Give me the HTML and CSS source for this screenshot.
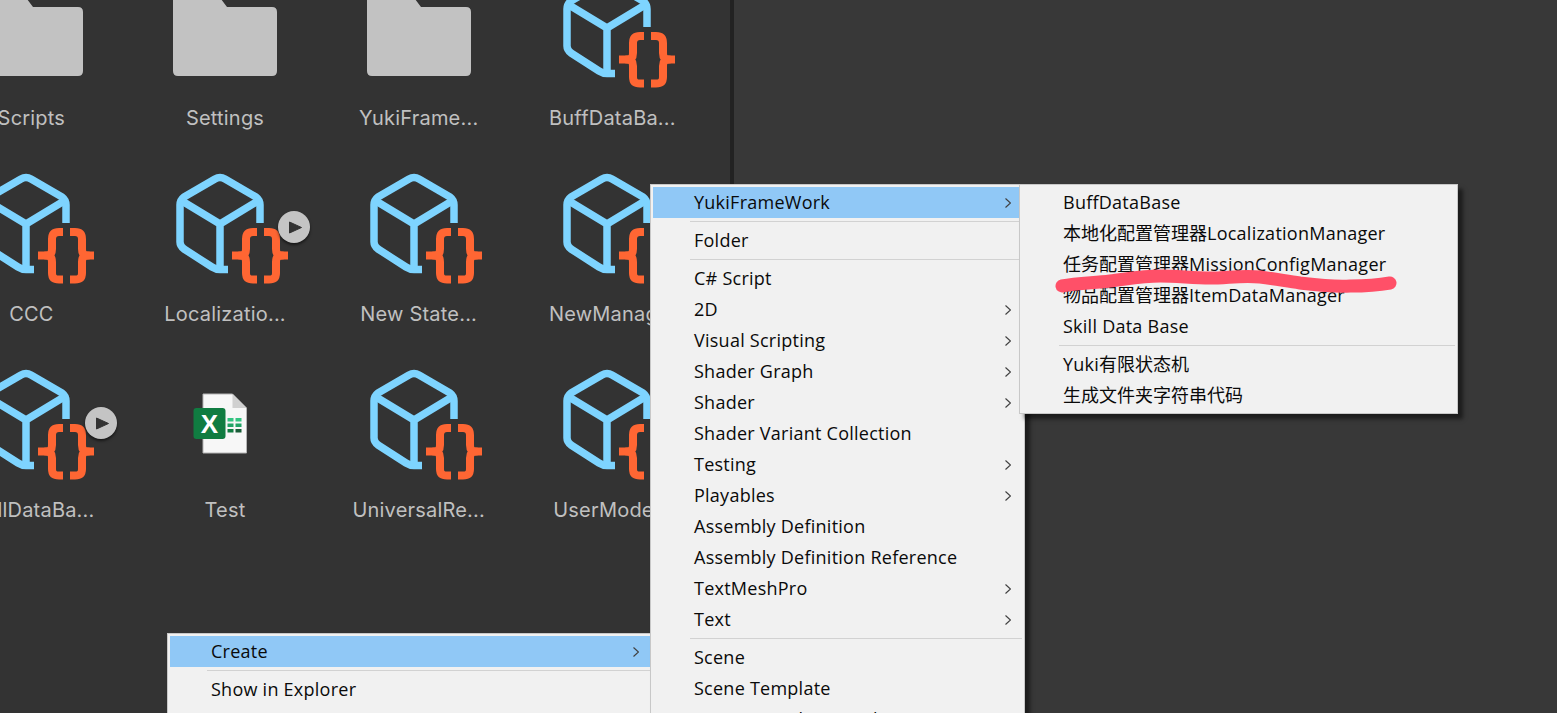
FILE: index.html
```html
<!DOCTYPE html>
<html lang="zh">
<head>
<meta charset="utf-8">
<title>Unity Project Create Menu</title>
<link rel="stylesheet" href="styles.css">
</head>
<body>
<svg class="defs" width="0" height="0" aria-hidden="true">
  <symbol id="script" viewBox="-11 -5 120 120">
    <g fill="none" stroke-linecap="butt" stroke-linejoin="round">
      <path class="cube" d="M84 51V33Q84 28 80 25L49 7Q44 4 39 7L8 25Q4 28 4 33V70Q4 74 8 77L36 95Q40 97.500 44 97.500H52"/>
      <path class="cube" d="M6 29L44 52L82 29M44 52V95"/>
      <path class="brace" d="M81 60H77Q70 60 70 67V77Q70 83.500 64 83.500Q70 83.500 70 90V101Q70 107.500 77 107.500H81"/>
      <path class="brace" d="M56 83.500H66"/>
      <path class="brace" d="M88 60H93Q100 60 100 67V77Q100 83.500 106 83.500Q100 83.500 100 90V101Q100 107.500 93 107.500H88"/>
      <path class="brace" d="M104 83.500H112"/>
    </g>
  </symbol>
  <symbol id="folder" viewBox="0 0 120 120">
    <path class="folder-shape" d="M13 22H50Q52 22 53 24L62 36H107Q112 36 112 41V100Q112 105 107 105H13Q8 105 8 100V27Q8 22 13 22Z"/>
  </symbol>
</svg>

<main class="editor">
  <section class="assets">
    <div class="grid">
      <div class="tile"><svg class="icon"><use href="#folder"/></svg><span class="name">Scripts</span></div>
      <div class="tile"><svg class="icon"><use href="#folder"/></svg><span class="name">Settings</span></div>
      <div class="tile"><svg class="icon"><use href="#folder"/></svg><span class="name">YukiFrame...</span></div>
      <div class="tile"><svg class="icon"><use href="#script"/></svg><span class="name">BuffDataBa...</span></div>

      <div class="tile"><svg class="icon"><use href="#script"/></svg><span class="name">CCC</span></div>
      <div class="tile">
        <svg class="icon"><use href="#script"/></svg>
        <span class="play"><svg width="13" height="13" viewBox="0 0 13 13"><path class="play-arrow" d="M.5 1L12.500 6.500L.5 12Z"/></svg></span>
        <span class="name">Localizatio...</span>
      </div>
      <div class="tile"><svg class="icon"><use href="#script"/></svg><span class="name">New State...</span></div>
      <div class="tile"><svg class="icon"><use href="#script"/></svg><span class="name">NewManag...</span></div>

      <div class="tile">
        <svg class="icon"><use href="#script"/></svg>
        <span class="play"><svg width="13" height="13" viewBox="0 0 13 13"><path class="play-arrow" d="M.5 1L12.500 6.500L.5 12Z"/></svg></span>
        <span class="name">SkillDataBa...</span>
      </div>
      <div class="tile">
        <svg class="icon" viewBox="0 0 120 120">
          <path class="xl-page" d="M38 31H67.500L81.500 45V90H38Z"/>
          <path class="xl-fold" d="M67.500 31L81.500 45H67.500Z"/>
          <rect class="xl-cell-light" x="62.500" y="55" width="6" height="3.500"/>
          <rect class="xl-cell-light" x="70.500" y="55" width="6" height="3.500"/>
          <rect class="xl-cell" x="62.500" y="60.500" width="6" height="3.500"/>
          <rect class="xl-cell" x="70.500" y="60.500" width="6" height="3.500"/>
          <rect class="xl-cell-mid" x="62.500" y="66" width="6" height="3.500"/>
          <rect class="xl-cell-dark" x="70.500" y="66" width="6" height="3.500"/>
          <rect class="xl-badge" x="28.500" y="45" width="32" height="31" rx="3"/>
          <text class="xl-x" x="44.500" y="70">X</text>
        </svg>
        <span class="name">Test</span>
      </div>
      <div class="tile"><svg class="icon"><use href="#script"/></svg><span class="name">UniversalRe...</span></div>
      <div class="tile"><svg class="icon"><use href="#script"/></svg><span class="name">UserMode...</span></div>
    </div>
  </section>
  <div class="divider"></div>
  <section class="scene"></section>
</main>

<nav class="menu menu-root">
  <div class="row active"><span>Create</span><svg class="chev" viewBox="0 0 6 10"><path d="M.5.5L5.500 5L.5 9.500"/></svg></div>
  <div class="sep"></div>
  <div class="row"><span>Show in Explorer</span></div>
</nav>

<nav class="menu menu-create">
  <div class="row active"><span>YukiFrameWork</span><svg class="chev" viewBox="0 0 6 10"><path d="M.5.5L5.500 5L.5 9.500"/></svg></div>
  <div class="sep"></div>
  <div class="row"><span>Folder</span></div>
  <div class="sep"></div>
  <div class="row"><span>C# Script</span></div>
  <div class="row"><span>2D</span><svg class="chev" viewBox="0 0 6 10"><path d="M.5.5L5.500 5L.5 9.500"/></svg></div>
  <div class="row"><span>Visual Scripting</span><svg class="chev" viewBox="0 0 6 10"><path d="M.5.5L5.500 5L.5 9.500"/></svg></div>
  <div class="row"><span>Shader Graph</span><svg class="chev" viewBox="0 0 6 10"><path d="M.5.5L5.500 5L.5 9.500"/></svg></div>
  <div class="row"><span>Shader</span><svg class="chev" viewBox="0 0 6 10"><path d="M.5.5L5.500 5L.5 9.500"/></svg></div>
  <div class="row"><span>Shader Variant Collection</span></div>
  <div class="row"><span>Testing</span><svg class="chev" viewBox="0 0 6 10"><path d="M.5.5L5.500 5L.5 9.500"/></svg></div>
  <div class="row"><span>Playables</span><svg class="chev" viewBox="0 0 6 10"><path d="M.5.5L5.500 5L.5 9.500"/></svg></div>
  <div class="row"><span>Assembly Definition</span></div>
  <div class="row"><span>Assembly Definition Reference</span></div>
  <div class="row"><span>TextMeshPro</span><svg class="chev" viewBox="0 0 6 10"><path d="M.5.5L5.500 5L.5 9.500"/></svg></div>
  <div class="row"><span>Text</span><svg class="chev" viewBox="0 0 6 10"><path d="M.5.5L5.500 5L.5 9.500"/></svg></div>
  <div class="sep"></div>
  <div class="row"><span>Scene</span></div>
  <div class="row"><span>Scene Template</span></div>
  <div class="row"><span>Scene Template Pipeline</span></div>
</nav>

<nav class="menu menu-yuki">
  <div class="row"><span>BuffDataBase</span></div>
  <div class="row"><span><span class="cjk">本地化配置管理器</span>LocalizationManager</span></div>
  <div class="row"><span><span class="cjk">任务配置管理器</span>MissionConfigManager</span></div>
  <div class="row"><span><span class="cjk">物品配置管理器</span>ItemDataManager</span></div>
  <div class="row"><span>Skill Data Base</span></div>
  <div class="sep"></div>
  <div class="row"><span>Yuki<span class="cjk">有限状态机</span></span></div>
  <div class="row"><span class="cjk">生成文件夹字符串代码</span></div>
</nav>

<svg class="scribble" viewBox="0 0 360 40" aria-hidden="true">
  <path d="M11 17C27 14 43 14 59 12C76 10 92 7 109 7C126 7 142 9 159 9C176 9 192 6 209 8C224 10 235 12 249 14C266 16 282 18 299 17C315 17 328 16 339 14"/>
</svg>
</body>
</html>
```

FILE: styles.css
```css
* { box-sizing: border-box; }

html, body {
  margin: 0;
  height: 100%;
  overflow: hidden;
  background: #383838;
}

.defs { position: absolute; }

symbol { overflow: visible; }

.editor {
  display: flex;
  height: 713px;
}

.assets {
  width: 730px;
  background: #333333;
  overflow: hidden;
}

.divider {
  width: 4px;
  background: #222222;
}

.scene {
  flex: 1;
  background: #383838;
}

.grid {
  display: grid;
  grid-template-columns: repeat(4, 193.7px);
  grid-auto-rows: 196px;
  margin: -29px 0 0 -65.5px;
}

.tile {
  position: relative;
  display: flex;
  flex-direction: column;
  align-items: center;
}

.icon {
  width: 120px;
  height: 120px;
  flex: none;
  overflow: visible;
}

.cube {
  stroke: #7ed4ff;
  stroke-width: 7.5;
}

.brace {
  stroke: #ff6633;
  stroke-width: 8;
}

.folder-shape { fill: #c2c2c2; }

.name {
  margin-top: 15px;
  font: 400 20px/24px Inter, "Liberation Sans", sans-serif;
  letter-spacing: .2px;
  color: #c0c0c0;
  white-space: nowrap;
}

.play {
  position: absolute;
  left: 150px;
  top: 44px;
  width: 32px;
  height: 32px;
  padding-left: 3px;
  display: flex;
  align-items: center;
  justify-content: center;
  border-radius: 50%;
  background: #c4c4c4;
  box-shadow: 0 2px 3px rgba(0, 0, 0, .55);
}

.play-arrow {
  fill: #333333;
  stroke: #333333;
  stroke-width: 1;
  stroke-linejoin: round;
}

.xl-page { fill: #f7f7f7; stroke: #b5b5b5; stroke-width: 1; }
.xl-fold { fill: #d0d0d0; }
.xl-badge { fill: #107c41; }
.xl-cell { fill: #21a366; }
.xl-cell-light { fill: #33c481; }
.xl-cell-mid { fill: #107c41; }
.xl-cell-dark { fill: #185c37; }
.xl-x {
  font: 700 26px "Liberation Sans", sans-serif;
  fill: #ffffff;
  text-anchor: middle;
}

.menu {
  position: absolute;
  padding: 2px;
  background: #f1f1f1;
  border: 1px solid #c8c8c8;
  font: 400 18px/24px "Open Sans", "Noto Sans CJK SC", sans-serif;
  letter-spacing: .25px;
  color: #0a0a0a;
  box-shadow: 5px 5px 4px rgba(0, 0, 0, .5);
}

.cjk { letter-spacing: 0; }

.menu-root {
  left: 167px;
  top: 633px;
  width: 486px;
  height: 120px;
}

.menu-create {
  left: 650px;
  top: 184px;
  width: 375px;
}

.menu-yuki {
  left: 1019px;
  top: 184px;
  width: 439px;
  height: 230px;
}

.row {
  height: 31px;
  display: flex;
  align-items: center;
  justify-content: space-between;
  padding: 0 11px 2px 41px;
  white-space: nowrap;
}

.active { background: #90c8f6; }

.sep {
  height: 1px;
  margin: 3px 0 3px 37px;
  background: #d2d2d2;
}

.chev {
  width: 6px;
  height: 10px;
  margin-top: 2px;
  fill: none;
  stroke: #404040;
  stroke-width: 1.2;
}

.scribble {
  position: absolute;
  left: 1051px;
  top: 269px;
  width: 360px;
  height: 40px;
}

.scribble path {
  fill: none;
  stroke: #ff5068;
  stroke-width: 13;
  stroke-linecap: round;
  stroke-linejoin: round;
}
```
